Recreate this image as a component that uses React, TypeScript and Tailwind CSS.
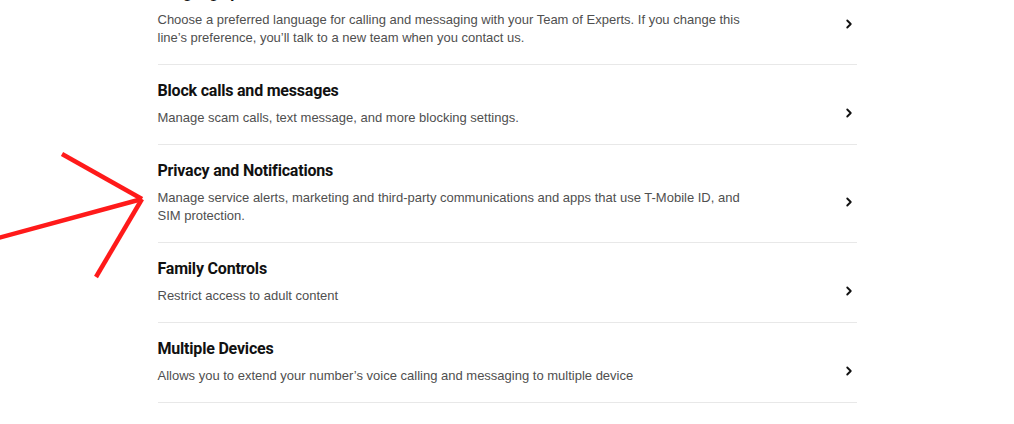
import { ChevronRight } from 'lucide-react'

interface Item {
  title: string
  description: string
}

const items: Item[] = [
  {
    title: 'Language preference',
    description:
      'Choose a preferred language for calling and messaging with your Team of Experts. If you change this line\u2019s preference, you\u2019ll talk to a new team when you contact us.',
  },
  {
    title: 'Block calls and messages',
    description: 'Manage scam calls, text message, and more blocking settings.',
  },
  {
    title: 'Privacy and Notifications',
    description:
      'Manage service alerts, marketing and third-party communications and apps that use T-Mobile ID, and SIM protection.',
  },
  {
    title: 'Family Controls',
    description: 'Restrict access to adult content',
  },
  {
    title: 'Multiple Devices',
    description: 'Allows you to extend your number\u2019s voice calling and messaging to multiple device',
  },
]

function SettingRow({ item }: { item: Item }) {
  return (
    <div className="flex items-center justify-between border-b border-[#e8e8e8] pt-[14px] pb-[17px] cursor-pointer">
      <div className="max-w-[604px]">
        <h3 className="text-[16px] leading-[24px] font-bold tracking-[-0.2px] text-[#111] font-['Roboto',sans-serif] mb-[6px]">
          {item.title}
        </h3>
        <p className="text-[13px] leading-[18px] text-[#4f4f4f] font-['Liberation_Sans',Arial,sans-serif]">
          {item.description}
        </p>
      </div>
      <ChevronRight className="mt-[20px] mr-[1px] h-[14px] w-[14px] text-[#111]" strokeWidth={3.2} />
    </div>
  )
}

export default function App() {
  return (
    <div className="relative h-[424px] w-full overflow-hidden bg-white">
      <div className="mx-auto mt-[-33px] w-[699px]">
        {items.map((item) => (
          <SettingRow key={item.title} item={item} />
        ))}
      </div>

      {/* annotation arrow */}
      <svg
        className="absolute left-0 top-0 pointer-events-none"
        width="160"
        height="290"
        viewBox="0 0 160 290"
      >
        <g stroke="#ff1a1a" strokeWidth="4.5" strokeLinecap="butt" fill="none">
          <line x1="62" y1="154" x2="142" y2="199" />
          <line x1="-2" y1="238" x2="142" y2="199" />
          <line x1="96" y1="277" x2="142" y2="199" />
        </g>
      </svg>
    </div>
  )
}
